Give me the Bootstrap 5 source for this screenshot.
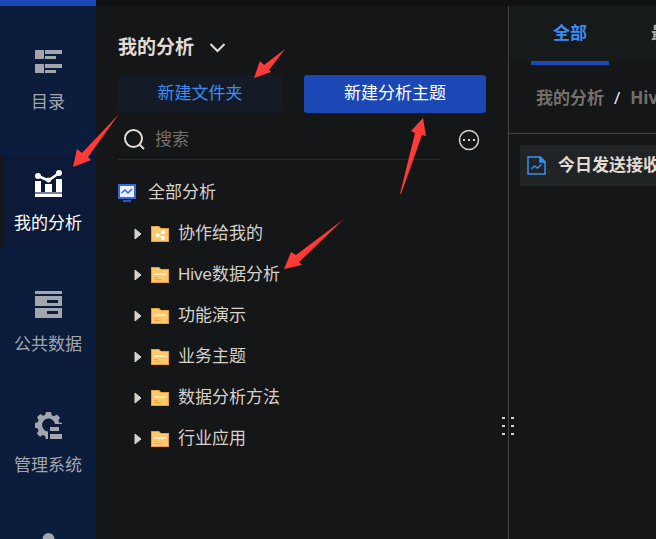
<!DOCTYPE html>
<html lang="zh-CN">
<head>
<meta charset="utf-8">
<meta name="viewport" content="width=device-width, initial-scale=1">
<title>我的分析</title>
<link href="https://cdn.jsdelivr.net/npm/bootstrap@5.3.0/dist/css/bootstrap.min.css" rel="stylesheet">
<style>
  body { background: #151618; color: #d6d1ca; font: 17px/24px "Liberation Sans", "Noto Sans CJK SC", sans-serif; }
  a, a:hover { color: inherit; text-decoration: none; }
  svg { display: block; flex: none; }
  .top-strip { height: 6px; background: #0f1113; }
  .top-strip div { width: 96px; background: #1b48b5; }
  .side-menu { width: 96px; background: #0c1c3d; padding-top: 28px; gap: 28px; color: #a3a6ad; }
  .side-link { flex: none; height: 93px; padding-top: 15px; gap: 15px; border-left: 3px solid transparent; border-right: 3px solid transparent; white-space: nowrap; }
  .side-link.active { color: #fff; background: #0c1a38; border-left-color: #151618; }
  .tree-panel { width: 412px; padding: 27px 22px 0; }
  .panel-title { font-size: 19px; line-height: 30px; font-weight: 700; color: #e0dbd4; }
  .act { height: 38px; padding: 0; border: 0; font-size: 17px; line-height: 24px; border-radius: 3px; }
  .act-folder { width: 164px; background: #151b26; color: #3a8df2; }
  .act-topic { width: 182px; background: #1b48b5; color: #fff; }
  .search-line { flex: 1; height: 47px; border-bottom: 1px solid #292a2c; padding: 7px 6px 0; gap: 10px; }
  .search-line input { background: none; border: 0; outline: 0; padding: 0; width: 100%; color: #d6d1ca; }
  .search-line input::placeholder { color: #73706c; opacity: 1; }
  .more { width: 22px; margin: 11px 6px 0 17px; }
  .tree-item { height: 41px; }
  .tree-sub { padding-left: 16px; gap: 9px; }
  .work-panel { border-left: 1px solid #414345; white-space: nowrap; }
  .tab-bar { background: #161a1b; height: 55px; padding-left: 22px; gap: 20px; }
  .tab-link { height: 59px; padding: 16px 22px 0; font-weight: 700; color: #aaa6a0; border-bottom: 4px solid transparent; }
  .tab-link.active { color: #3a8df2; border-color: #1b48b5; }
  .crumbs { height: 73px; padding: 1px 0 0 27px; gap: 10px; border-bottom: 1px solid #414345; font-family: "Open Sans", "Noto Sans CJK SC", sans-serif; font-weight: 700; color: #73706c; }
  .file-row { margin: 11px 0 0 11px; padding-left: 7px; height: 41px; gap: 12px; background: #212425; font-weight: 700; color: #e0dbd4; }
  .grip { left: -8px; top: 410px; padding: 0; }
  .arrows { left: 0; top: 0; pointer-events: none; }
</style>
<script src="https://cdn.jsdelivr.net/npm/bootstrap@5.3.0/dist/js/bootstrap.bundle.min.js"></script>
</head>
<body>
<svg class="d-none" aria-hidden="true">
  <symbol id="folder" viewBox="0 0 18 18">
    <path d="M0 1h8l2 2h8v14H0z" fill="#e9a13b"/>
    <path d="M1 2h7l2 2h7v12H1z" fill="#fec96b"/>
  </symbol>
  <symbol id="folder-doc" viewBox="0 0 18 18">
    <use href="#folder"/>
    <path d="M3 9V7.500h12V9" fill="#fff0cc"/>
    <path d="M3 11.500h4M3 13.500h7" stroke="#eba94a"/>
  </symbol>
  <symbol id="caret" viewBox="0 0 8 12"><path d="M1 1v10l6-5z" fill="#d6d1ca" stroke="#d6d1ca" stroke-linejoin="round"/></symbol>
</svg>
<div class="vh-100 d-flex flex-column overflow-hidden position-relative">
  <div class="top-strip d-flex flex-shrink-0"><div></div></div>
  <div class="d-flex flex-grow-1 overflow-hidden">
    <nav class="side-menu d-flex flex-column flex-shrink-0 overflow-hidden" aria-label="主导航">
      <a href="#" class="side-link d-flex flex-column align-items-center">
        <svg width="27" height="27" fill="currentColor"><path d="M0 1h9v9H0zM10 1h17v4H10zM10 7h11v3H10zM0 15h9v9H0zM10 15h17v4H10zM10 21h11v3H10z"/></svg>
        <span>目录</span>
      </a>
      <a href="#" class="side-link active d-flex flex-column align-items-center" aria-current="page">
        <svg width="27" height="27" fill="currentColor"><path d="M0 11h6v11H0zM10 14h7v8h-7zM21 9h6v13h-6zM0 24h27v3H0z"/><path d="M0 22h27v2H0z" opacity=".45"/><path d="M3 6l10.500 4.500L24 3" fill="none" stroke="currentColor" stroke-width="2.500"/><circle cx="3" cy="6" r="3"/><circle cx="13.500" cy="10" r="2.500"/><circle cx="24" cy="3" r="3"/></svg>
        <span>我的分析</span>
      </a>
      <a href="#" class="side-link d-flex flex-column align-items-center">
        <svg width="27" height="27" fill="currentColor" fill-rule="evenodd"><path d="M0 0h27v3H0zM0 5h27v10H0zM12 9v3h11V9zM0 17h27v10H0zM12 20v3h11v-3z"/></svg>
        <span>公共数据</span>
      </a>
      <a href="#" class="side-link d-flex flex-column align-items-center">
        <svg width="27" height="27">
          <path fill="currentColor" fill-rule="evenodd" d="M11 0h5l.7 3.200 2.300 1 2.800-1.800 3.300 3.300-1.800 2.800.8 1.900 2.900.7V12H20a6.500 6.500 0 1 0-7 7.500V27h-2.200l-.7-3-2.300-1L5 24.700 1.800 21.500l1.800-2.800-1-2.300L0 15.700V11l2.700-.7 1-2.300L2 5.300 5.300 2l2.700 1.800 2.300-1z"/>
          <path d="M15 15h9v4h-9zM15 22h12v5H15z" fill="currentColor"/>
        </svg>
        <span>管理系统</span>
      </a>
      <a href="#" class="side-link d-flex flex-column align-items-center" aria-label="用户">
        <svg width="27" height="27" fill="currentColor"><circle cx="13.500" cy="6" r="6"/><path d="M2 27c0-9 4-13 11.500-13S25 18 25 27z"/></svg>
      </a>
    </nav>

    <section class="tree-panel flex-shrink-0">
      <div class="d-flex align-items-center gap-3">
        <h1 class="panel-title m-0">我的分析</h1>
        <button class="btn p-0 border-0" aria-label="切换"><svg width="15" height="10" fill="none" stroke="#e0dbd4" stroke-width="2"><path d="M0.500 1l7 7 7-7"/></svg></button>
      </div>
      <div class="d-flex justify-content-between mt-2 pt-1">
        <button class="btn act act-folder">新建文件夹</button>
        <button class="btn act act-topic">新建分析主题</button>
      </div>
      <div class="d-flex align-items-start">
        <label class="search-line d-flex align-items-center">
          <svg width="21" height="21" fill="none" stroke="#e0dbd4" stroke-width="2"><circle cx="9.500" cy="9.500" r="8.500"/><path d="M15.500 15.500l4.500 4.500"/></svg>
          <input type="text" placeholder="搜索" aria-label="搜索">
        </label>
        <button class="btn p-0 border-0 more mt-3" aria-label="更多"><svg width="22" height="22"><circle cx="11" cy="11" r="9.500" fill="none" stroke="#d6d1ca" stroke-width="1.500"/><path d="M5 10h2v2H5zM10 10h2v2h-2zM15 10h2v2h-2z" fill="#d6d1ca"/></svg></button>
      </div>
      <div class="pt-2 mt-1">
        <a href="#" class="tree-item d-flex align-items-center">
          <svg class="me-2" width="18" height="18"><path d="M1 1h16v13H1z" fill="#e8f0ff" stroke="#3567dc" stroke-width="2"/><path d="M3.500 9L7 6l3 3 4-4" fill="none" stroke="#3567dc" stroke-width="1.500"/><path d="M5 16h8v2H5z" fill="#2c55b8"/></svg>
          <span class="ms-1">全部分析</span>
        </a>
        <a href="#" class="tree-item tree-sub d-flex align-items-center">
          <svg width="8" height="12"><use href="#caret"/></svg>
          <svg width="18" height="18"><use href="#folder"/><g fill="#fff"><path d="M12 7L6.500 10 12 13" fill="none" stroke="#fff"/><circle cx="6.500" cy="10" r="2"/><circle cx="12" cy="7" r="2"/><circle cx="12" cy="13" r="2"/></g></svg>
          <span>协作给我的</span>
        </a>
        <a href="#" class="tree-item tree-sub d-flex align-items-center"><svg width="8" height="12"><use href="#caret"/></svg><svg width="18" height="18"><use href="#folder-doc"/></svg><span>Hive数据分析</span></a>
        <a href="#" class="tree-item tree-sub d-flex align-items-center"><svg width="8" height="12"><use href="#caret"/></svg><svg width="18" height="18"><use href="#folder-doc"/></svg><span>功能演示</span></a>
        <a href="#" class="tree-item tree-sub d-flex align-items-center"><svg width="8" height="12"><use href="#caret"/></svg><svg width="18" height="18"><use href="#folder-doc"/></svg><span>业务主题</span></a>
        <a href="#" class="tree-item tree-sub d-flex align-items-center"><svg width="8" height="12"><use href="#caret"/></svg><svg width="18" height="18"><use href="#folder-doc"/></svg><span>数据分析方法</span></a>
        <a href="#" class="tree-item tree-sub d-flex align-items-center"><svg width="8" height="12"><use href="#caret"/></svg><svg width="18" height="18"><use href="#folder-doc"/></svg><span>行业应用</span></a>
      </div>
    </section>

    <main class="work-panel flex-grow-1 position-relative">
      <div class="tab-bar d-flex">
        <a href="#" class="tab-link active">全部</a>
        <a href="#" class="tab-link">最近</a>
      </div>
      <nav class="crumbs d-flex align-items-center" aria-label="路径">
        <a href="#">我的分析</a><span class="fw-normal text-light">/</span><a href="#">Hive数据分析</a>
      </nav>
      <a href="#" class="file-row d-flex align-items-center">
        <svg width="19" height="19" fill="none" stroke="#3a8df2" stroke-width="1.500"><path d="M1 1h12l5 5v12H1z"/><path d="M13 1v5h5z" fill="#3a8df2"/><path d="M4.500 13l3-3 3 2 4-3.500"/></svg>
        <span>今日发送接收</span>
      </a>
      <button class="btn grip border-0 position-absolute" aria-label="拖动"><svg width="15" height="20" fill="#d6d1ca"><path d="M1 1h3v2H1zM10 1h3v2h-3zM1 9h3v2H1zM10 9h3v2h-3zM1 17h3v2H1zM10 17h3v2h-3z"/></svg></button>
    </main>
  </div>
  <svg class="arrows position-absolute" width="656" height="539" fill="#ff3a38" aria-hidden="true">
    <path d="M254 78l6-17 4 4 21-16-16 21 2 2z"/>
    <path d="M73 167l4-18 5 4 37-39-31 43 3 3z"/>
    <path d="M423 118l-12 13 4 2-15 61h1l21-59 4 1z"/>
    <path d="M284 269l7-17 5 3 48-36-45 43 3 3z"/>
  </svg>
</div>
</body>
</html>
